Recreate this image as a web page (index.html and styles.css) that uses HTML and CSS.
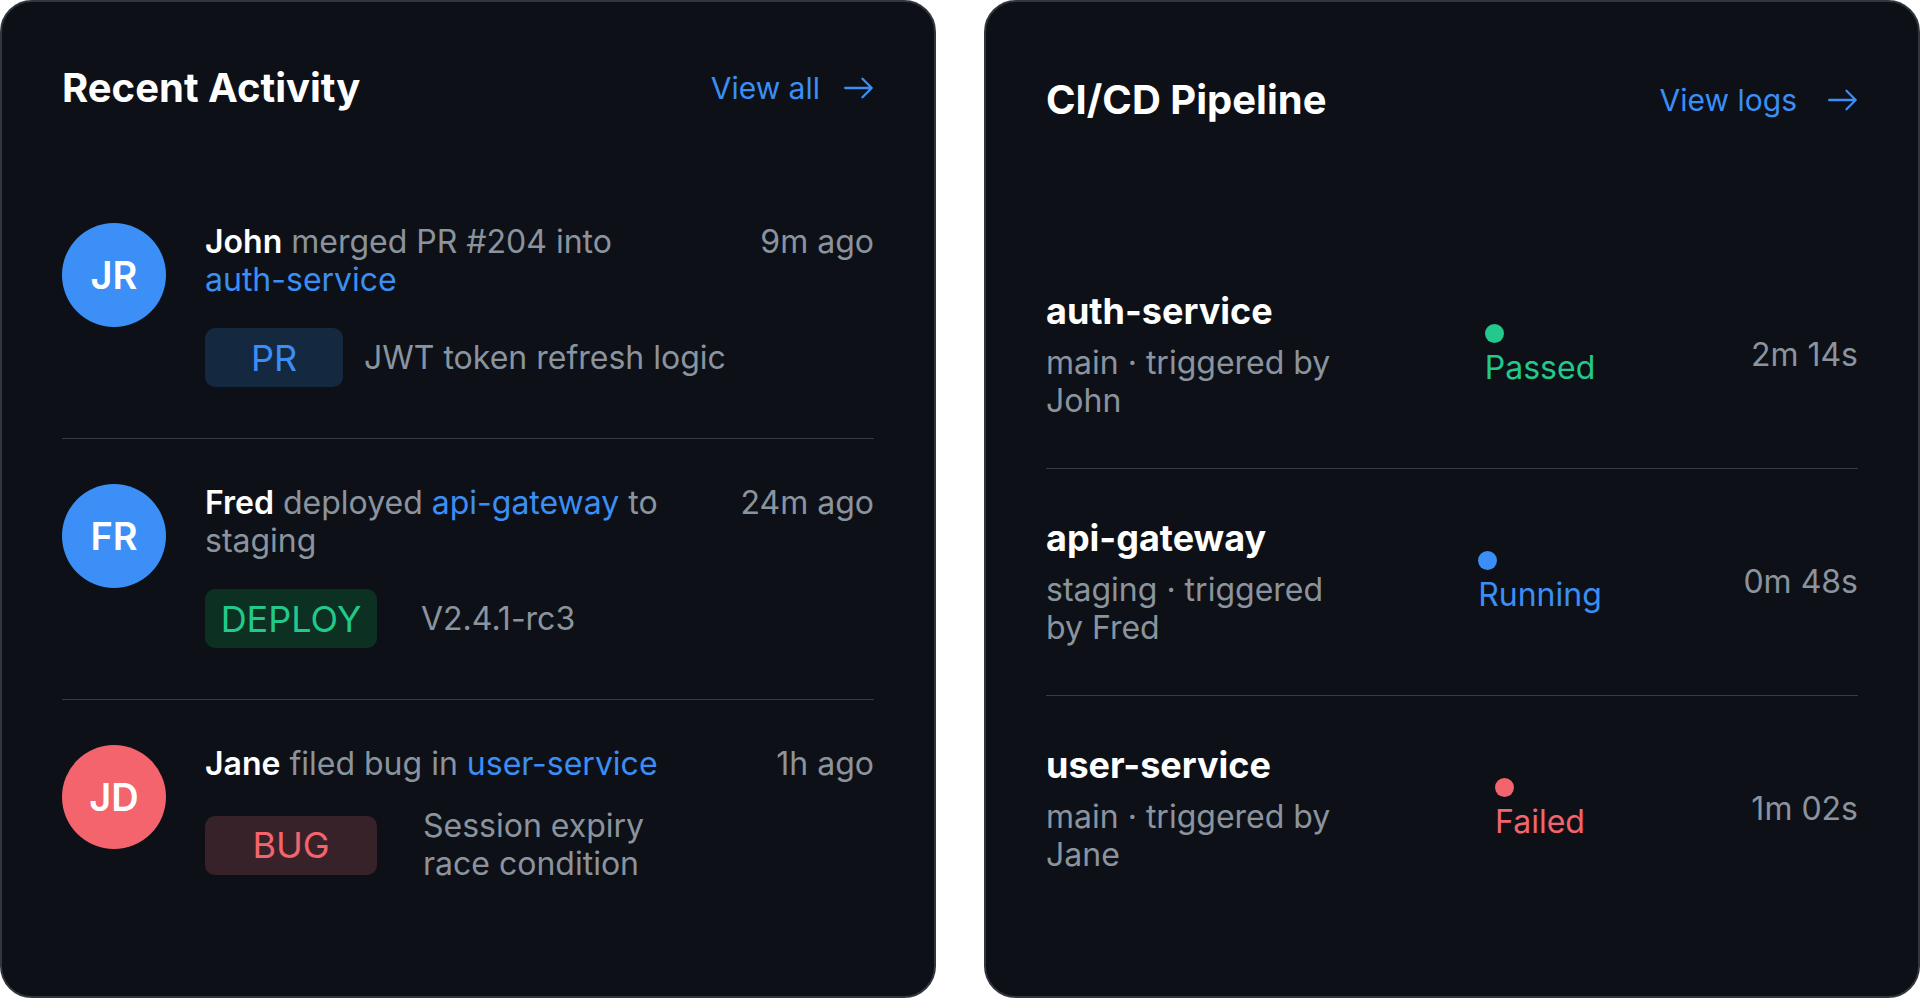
FILE: index.html
```html
<!DOCTYPE html>
<html lang="en">
<head>
<meta charset="utf-8">
<title>Dashboard</title>
<link rel="stylesheet" href="styles.css">
</head>
<body>
<main class="board">
  <section class="card card-activity">
    <header class="card-head">
      <h2 class="card-title">Recent Activity</h2>
      <a class="card-link" href="#">View all
        <svg class="arrow" viewBox="0 0 26 20" aria-hidden="true"><path d="M1 10h23M16 2l8 8-8 8"/></svg>
      </a>
    </header>
    <ul class="activity-list">
      <li class="activity">
        <div class="avatar avatar-blue">JR</div>
        <div class="activity-body">
          <div class="activity-top">
            <p class="activity-text"><strong>John</strong> merged PR #204 into <a class="ref" href="#">auth-service</a></p>
            <span class="time">9m ago</span>
          </div>
          <div class="activity-detail">
            <span class="tag tag-pr">PR</span>
            <span class="detail-text">JWT token refresh logic</span>
          </div>
        </div>
      </li>
      <li class="activity">
        <div class="avatar avatar-blue">FR</div>
        <div class="activity-body">
          <div class="activity-top">
            <p class="activity-text"><strong>Fred</strong> deployed <a class="ref" href="#">api-gateway</a> to staging</p>
            <span class="time">24m ago</span>
          </div>
          <div class="activity-detail">
            <span class="tag tag-deploy">DEPLOY</span>
            <span class="detail-text detail-wide">V2.4.1-rc3</span>
          </div>
        </div>
      </li>
      <li class="activity">
        <div class="avatar avatar-red">JD</div>
        <div class="activity-body">
          <div class="activity-top">
            <p class="activity-text"><strong>Jane</strong> filed bug in <a class="ref" href="#">user-service</a></p>
            <span class="time">1h ago</span>
          </div>
          <div class="activity-detail">
            <span class="tag tag-bug">BUG</span>
            <span class="detail-text detail-wider detail-narrow">Session expiry race condition</span>
          </div>
        </div>
      </li>
    </ul>
  </section>

  <section class="card card-pipeline">
    <header class="card-head">
      <h2 class="card-title">CI/CD Pipeline</h2>
      <a class="card-link" href="#">View logs
        <svg class="arrow" viewBox="0 0 26 20" aria-hidden="true"><path d="M1 10h23M16 2l8 8-8 8"/></svg>
      </a>
    </header>
    <ul class="pipeline-list">
      <li class="pipeline">
        <div class="pipe-info">
          <div class="pipe-name">auth-service</div>
          <div class="pipe-meta">main · triggered by John</div>
        </div>
        <div class="status status-passed"><span class="dot"></span><span class="status-label">Passed</span></div>
        <div class="duration">2m 14s</div>
      </li>
      <li class="pipeline">
        <div class="pipe-info">
          <div class="pipe-name">api-gateway</div>
          <div class="pipe-meta">staging · triggered by Fred</div>
        </div>
        <div class="status status-running"><span class="dot"></span><span class="status-label">Running</span></div>
        <div class="duration">0m 48s</div>
      </li>
      <li class="pipeline">
        <div class="pipe-info">
          <div class="pipe-name">user-service</div>
          <div class="pipe-meta">main · triggered by Jane</div>
        </div>
        <div class="status status-failed"><span class="dot"></span><span class="status-label">Failed</span></div>
        <div class="duration">1m 02s</div>
      </li>
    </ul>
  </section>
</main>
</body>
</html>
```

FILE: styles.css
```css
* { box-sizing: border-box; }

html, body {
  margin: 0;
  padding: 0;
  background: #ffffff;
}

body {
  font-family: Inter, "Noto Sans", "Liberation Sans", sans-serif;
  color: #8b949e;
}

.board {
  display: grid;
  grid-template-columns: 936px 936px;
  column-gap: 48px;
  height: 998px;
}

.card {
  background: #0d1117;
  border: 2px solid #30363d;
  border-radius: 32px;
  padding: 60px;
}

.card-pipeline {
  padding: 72px 60px 60px 60px;
}

.card-head {
  display: flex;
  align-items: center;
  justify-content: space-between;
  height: 52px;
}

.card-title {
  margin: 0;
  font-size: 40px;
  line-height: 52px;
  font-weight: 700;
  color: #ffffff;
}

.card-link {
  display: flex;
  align-items: center;
  gap: 24px;
  font-size: 30px;
  line-height: 40px;
  color: #3b8ef5;
  text-decoration: none;
}

.card-pipeline .card-link {
  gap: 31px;
}

.arrow {
  width: 30px;
  height: 24px;
  fill: none;
  stroke: #3b8ef5;
  stroke-width: 2;
  stroke-linecap: round;
  stroke-linejoin: round;
}

/* ---------- activity ---------- */

.activity-list {
  list-style: none;
  margin: 64px 0 0;
  padding: 0;
}

.activity {
  display: flex;
  align-items: flex-start;
  gap: 39px;
  padding: 45px 0 46px;
  border-bottom: 1px solid #363b43;
}

.activity:last-child { border-bottom: none; }

.avatar {
  flex: none;
  width: 104px;
  height: 104px;
  border-radius: 50%;
  display: flex;
  align-items: center;
  justify-content: center;
  color: #ffffff;
  font-size: 38px;
  font-weight: 600;
}

.avatar-blue { background: #3b8ff6; }
.avatar-red { background: #f3646c; }

.activity-body {
  flex: 1;
  min-width: 0;
}

.activity-top {
  display: flex;
  justify-content: space-between;
  align-items: flex-start;
  gap: 40px;
}

.activity-text {
  margin: 0;
  font-size: 32px;
  line-height: 38px;
  color: #8b949e;
  max-width: 490px;
}

.activity-text strong {
  color: #ffffff;
  font-weight: 600;
}

.ref {
  color: #3b8ef5;
  text-decoration: none;
}

.time {
  flex: none;
  font-size: 32px;
  line-height: 38px;
  color: #8b949e;
}

.activity-detail {
  display: flex;
  align-items: center;
  gap: 21px;
  margin-top: 24px;
}

.tag {
  flex: none;
  display: flex;
  align-items: center;
  justify-content: center;
  width: 172px;
  height: 59px;
  margin: 5px 0;
  border-radius: 10px;
  font-size: 36px;
  line-height: 40px;
}

.tag-pr { width: 138px; background: #142840; color: #3b8ef5; }
.tag-deploy { background: #0c3022; color: #22c98b; }
.tag-bug { background: #38222a; color: #f3646c; }

.detail-text {
  font-size: 32px;
  line-height: 38px;
  color: #8b949e;
}

.detail-wide { margin-left: 23px; }
.detail-wider { margin-left: 25px; }
.detail-narrow { max-width: 250px; }

/* ---------- pipeline ---------- */

.pipeline-list {
  list-style: none;
  margin: 116px 0 0;
  padding: 0;
}

.pipeline {
  display: grid;
  grid-template-columns: 300px 1fr 124px;
  align-items: center;
  padding: 48px 0;
  border-bottom: 1px solid #363b43;
}

.pipeline:last-child { border-bottom: none; }

.pipe-name {
  font-size: 36px;
  line-height: 42px;
  font-weight: 700;
  color: #ffffff;
  margin-bottom: 12px;
}

.pipe-meta {
  font-size: 32px;
  line-height: 38px;
  color: #8b949e;
}

.status {
  justify-self: center;
  display: flex;
  flex-direction: column;
  align-items: flex-start;
  gap: 6px;
  font-size: 32px;
  line-height: 38px;
}

.dot {
  width: 19px;
  height: 19px;
  border-radius: 50%;
}

.status-passed { color: #22c98b; }
.status-passed .dot { background: #22c98b; }
.status-running { color: #3b8ef5; }
.status-running .dot { background: #3b8ef5; }
.status-failed { color: #f3646c; }
.status-failed .dot { background: #f3646c; }

.duration {
  justify-self: end;
  font-size: 32px;
  line-height: 38px;
  color: #8b949e;
}
```
